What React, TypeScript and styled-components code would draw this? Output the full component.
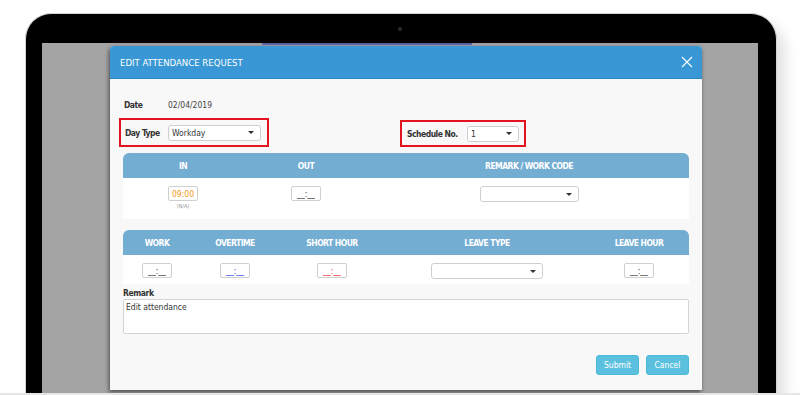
import styled, { createGlobalStyle } from 'styled-components'

const GlobalStyle = createGlobalStyle`
    html, body {
        margin: 0;
        padding: 0;
        background: #fff;
    }
    body {
        font-family: "DejaVu Sans Condensed", "DejaVu Sans", sans-serif;
        font-stretch: condensed;
        color: #333;
    }
`

const Stage = styled.div`
    width: 800px;
    height: 395px;
    overflow: hidden;
    display: flex;
    flex-direction: column;
    padding-top: 13px;
    box-sizing: border-box;
`
const Laptop = styled.div`
    width: 752px;
    height: 380px;
    margin-left: 25px;
    box-sizing: border-box;
    background: #000;
    border: 1px solid #d4d4d4;
    border-bottom: none;
    border-radius: 26px 26px 0 0;
    padding: 0 18px 0 16px;
    display: flex;
    flex-direction: column;
    box-shadow: 8px 10px 14px rgba(0, 0, 0, 0.12);
`
const Bezel = styled.div`
    height: 29px;
    display: flex;
    align-items: center;
    justify-content: center;
`
const Camera = styled.span`
    width: 4px;
    height: 4px;
    border-radius: 50%;
    background: #2a2a2a;
`
const Screen = styled.div`
    flex: 1;
    background: #a4a4a4;
    display: flex;
    flex-direction: column;
`
const ScreenTop = styled.div`
    height: 3px;
    padding-left: 220px;
`
const ScreenBar = styled.div`
    width: 210px;
    height: 2px;
    background: #5a64a8;
`
const ModalRow = styled.div`
    padding-left: 68px;
`
const BottomEdge = styled.div`
    height: 2px;
    background: #e6e6e6;
`

const Modal = styled.div`
    width: 592px;
    height: 344px;
    background: #f8f8f8;
    border-radius: 4px 4px 0 0;
    box-shadow: -1px 2px 4px rgba(0, 0, 0, 0.55);
    display: flex;
    flex-direction: column;
`
const Header = styled.div`
    height: 32px;
    border-bottom: 1px solid #2e84bd;
    background: #3897d4;
    border-radius: 4px 4px 0 0;
    display: flex;
    align-items: center;
    justify-content: space-between;
    padding: 0 9px 0 10px;
`
const Title = styled.h1`
    margin: 0;
    font-size: 9.5px;
    font-weight: normal;
    color: #fff;
`
const Close = styled.button`
    border: none;
    background: none;
    padding: 0;
    width: 12px;
    height: 12px;
    display: flex;
`
const Body = styled.div`
    padding: 0 13px;
    display: flex;
    flex-direction: column;
`
const DateRow = styled.div`
    margin-top: 19px;
    height: 14px;
    padding-left: 1px;
    display: flex;
    align-items: center;
`
const Label = styled.span<{ $w: number }>`
    width: ${p => p.$w}px;
    white-space: nowrap;
    font-size: 8.5px;
    font-weight: bold;
    letter-spacing: -0.5px;
    color: #333;
`
const Value = styled.span`
    font-size: 8.5px;
    color: #444;
`
const FieldsRow = styled.div`
    margin: 6px 0 0 -4px;
    display: flex;
    align-items: flex-end;
`
const Highlight = styled.div<{ $w: number; $h: number; $gap?: number }>`
    width: ${p => p.$w}px;
    height: ${p => p.$h}px;
    margin-left: ${p => p.$gap || 0}px;
    box-sizing: border-box;
    border: 2px solid #e1141f;
    display: flex;
    align-items: center;
    padding-left: ${p => (p.$gap ? 5 : 4)}px;
`
const Select = styled.div<{ $w: number }>`
    width: ${p => p.$w}px;
    height: 16px;
    box-sizing: border-box;
    border: 1px solid #cfcfcf;
    border-radius: 3px;
    background: #fff;
    font-size: 8.5px;
    color: #333;
    display: flex;
    align-items: center;
    padding: 0 6px 0 3px;
    &::after {
        content: '';
        margin-left: auto;
        border-left: 3px solid transparent;
        border-right: 3px solid transparent;
        border-top: 3px solid #333;
    }
`
const Table = styled.div<{ $gap: number }>`
    margin-top: ${p => p.$gap}px;
    display: flex;
    flex-direction: column;
`
const Row = styled.div<{ $cols: string; $h: number; $head?: boolean }>`
    display: grid;
    grid-template-columns: ${p => p.$cols};
    height: ${p => p.$h}px;
    box-sizing: border-box;
    background: ${p => (p.$head ? '#74add2' : '#fff')};
    border-radius: ${p => (p.$head ? '6px 6px 0 0' : '0')};
    align-items: ${p => (p.$head ? 'center' : 'start')};
    padding-top: ${p => (p.$head ? 0 : 8)}px;
`
const Th = styled.div`
    text-align: center;
    font-size: 8.5px;
    font-weight: bold;
    letter-spacing: -0.55px;
    color: #fff;
`
const Td = styled.div`
    display: flex;
    flex-direction: column;
    align-items: center;
`
const TimeBox = styled.div<{ $color?: string }>`
    width: 30px;
    height: 15px;
    box-sizing: border-box;
    border: 1px solid #cfcfcf;
    border-radius: 2px;
    background: #fff;
    font-size: 8.5px;
    color: ${p => p.$color || '#333'};
    display: flex;
    align-items: center;
    justify-content: center;
`
const Note = styled.span`
    margin-top: 2px;
    font-size: 5.5px;
    color: #999;
`
const RemarkLabel = styled.div`
    margin-top: 4px;
    font-size: 8.5px;
    font-weight: bold;
    letter-spacing: -0.4px;
    line-height: 10px;
    color: #333;
`
const TextArea = styled.div`
    margin-top: 1px;
    height: 35px;
    box-sizing: border-box;
    border: 1px solid #d4d4d4;
    border-radius: 2px;
    background: #fff;
    padding: 2px 2px;
    font-size: 8.5px;
    color: #333;
`
const Actions = styled.div`
    margin-top: 21px;
    display: flex;
    justify-content: flex-end;
    gap: 7px;
`
const Button = styled.button`
    width: 43px;
    height: 20px;
    border: 1px solid #4bbad9;
    border-radius: 3px;
    background: #5bc0de;
    color: #fff;
    font-family: inherit;
    font-stretch: inherit;
    font-size: 8.5px;
    padding: 0;
`

const cols1 = '120px 126px 1fr'
const cols2 = '68px 88px 106px 204px 1fr'

const App = () => {
    return (
        <Stage>
            <GlobalStyle />
            <Laptop>
                <Bezel>
                    <Camera />
                </Bezel>
                <Screen>
                    <ScreenTop>
                        <ScreenBar />
                    </ScreenTop>
                    <ModalRow>
                        <Modal>
                            <Header>
                                <Title>EDIT ATTENDANCE REQUEST</Title>
                                <Close aria-label="Close">
                                    <svg width="12" height="12" viewBox="0 0 12 12">
                                        <path d="M1 1L11 11M11 1L1 11" stroke="#fff" strokeWidth="1.1" />
                                    </svg>
                                </Close>
                            </Header>
                            <Body>
                                <DateRow>
                                    <Label $w={44}>Date</Label>
                                    <Value>02/04/2019</Value>
                                </DateRow>
                                <FieldsRow>
                                    <Highlight $w={150} $h={29}>
                                        <Label $w={43}>Day Type</Label>
                                        <Select $w={93}>Workday</Select>
                                    </Highlight>
                                    <Highlight $w={126} $h={27} $gap={131}>
                                        <Label $w={60}>Schedule No.</Label>
                                        <Select $w={52}>1</Select>
                                    </Highlight>
                                </FieldsRow>

                                <Table $gap={6}>
                                    <Row $cols={cols1} $h={25} $head>
                                        <Th>IN</Th>
                                        <Th>OUT</Th>
                                        <Th>REMARK / WORK CODE</Th>
                                    </Row>
                                    <Row $cols={cols1} $h={41}>
                                        <Td>
                                            <TimeBox $color="#f39a1e">09:00</TimeBox>
                                            <Note>(N/A)</Note>
                                        </Td>
                                        <Td>
                                            <TimeBox>__:__</TimeBox>
                                        </Td>
                                        <Td>
                                            <Select $w={99} />
                                        </Td>
                                    </Row>
                                </Table>

                                <Table $gap={11}>
                                    <Row $cols={cols2} $h={25} $head>
                                        <Th>WORK</Th>
                                        <Th>OVERTIME</Th>
                                        <Th>SHORT HOUR</Th>
                                        <Th>LEAVE TYPE</Th>
                                        <Th>LEAVE HOUR</Th>
                                    </Row>
                                    <Row $cols={cols2} $h={29}>
                                        <Td><TimeBox>__:__</TimeBox></Td>
                                        <Td><TimeBox $color="#2b3df0">__:__</TimeBox></Td>
                                        <Td><TimeBox $color="#f02b2b">__:__</TimeBox></Td>
                                        <Td><Select $w={112} /></Td>
                                        <Td><TimeBox>__:__</TimeBox></Td>
                                    </Row>
                                </Table>

                                <RemarkLabel>Remark</RemarkLabel>
                                <TextArea>Edit attendance</TextArea>

                                <Actions>
                                    <Button>Submit</Button>
                                    <Button>Cancel</Button>
                                </Actions>
                            </Body>
                        </Modal>
                    </ModalRow>
                </Screen>
            </Laptop>
            <BottomEdge />
        </Stage>
    )
}

export default App
